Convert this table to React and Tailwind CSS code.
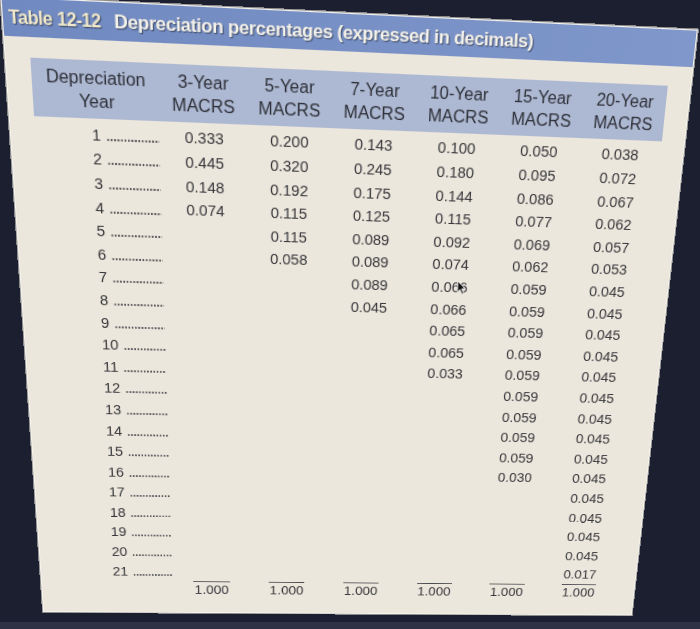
import React from 'react';

const columns = [
  { label: '3-Year', values: ['0.333', '0.445', '0.148', '0.074'] },
  { label: '5-Year', values: ['0.200', '0.320', '0.192', '0.115', '0.115', '0.058'] },
  { label: '7-Year', values: ['0.143', '0.245', '0.175', '0.125', '0.089', '0.089', '0.089', '0.045'] },
  {
    label: '10-Year',
    values: ['0.100', '0.180', '0.144', '0.115', '0.092', '0.074', '0.066', '0.066', '0.065', '0.065', '0.033'],
  },
  {
    label: '15-Year',
    values: [
      '0.050', '0.095', '0.086', '0.077', '0.069', '0.062',
      '0.059', '0.059', '0.059', '0.059', '0.059', '0.059', '0.059', '0.059', '0.059', '0.030',
    ],
  },
  {
    label: '20-Year',
    values: [
      '0.038', '0.072', '0.067', '0.062', '0.057', '0.053',
      '0.045', '0.045', '0.045', '0.045', '0.045', '0.045', '0.045',
      '0.045', '0.045', '0.045', '0.045', '0.045', '0.045', '0.045', '0.017',
    ],
  },
];

const years = Array.from({ length: 21 }, (_, i) => i + 1);

const Cursor = () => (
  <svg viewBox="0 0 12 18" className="absolute left-[47px] top-[3px] w-[10px] h-[15px]">
    <path d="M1 1 L1 14 L4 11 L6.5 16.5 L8.5 15.5 L6 10 L10.5 10 Z" fill="#111" stroke="#fff" strokeWidth="1" strokeLinejoin="round" />
  </svg>
);

const App = () => {
  return (
    <div className="w-[700px] h-[629px] overflow-hidden bg-[#1b1f2f] shadow-[inset_0_-7px_0_#2e3244] pt-[29px] pl-[30px] font-['Liberation_Sans',Arial,sans-serif]">
      <div className="w-[640px] h-[620px] bg-[#ece7dc] border border-[#f7f5ef] shadow-[0_0_0_1px_#8a8a8a] origin-center [transform:perspective(1000px)_rotateX(-16deg)_rotateY(3.5deg)_rotate(2.5deg)_skewX(1.2deg)]">
        {/* Title bar */}
        <div className="h-[33px] bg-[linear-gradient(90deg,#7089c0,#7f97ca)] flex items-center px-[5px] gap-[12px] [text-shadow:1px_1px_1px_rgba(0,0,0,0.45)]">
          <span className="text-[16px] font-bold tracking-tight text-[#f1e9cb]">Table 12-12</span>
          <span className="text-[17px] font-bold tracking-tight text-[#f5f2ea]">Depreciation percentages (expressed in decimals)</span>
        </div>

        <div className="px-[22px] pt-[18px] text-[#36363b]">
          {/* Header band */}
          <div className="h-[52px] bg-[#adb8d2] flex items-center text-[16px] leading-[21px] text-[#2e3038]">
            <div className="w-[116px] text-center">
              Depreciation
              <br />
              Year
            </div>
            {columns.map((c) => (
              <div key={c.label} className="w-[80px] text-center">
                {c.label}
                <br />
                MACRS
              </div>
            ))}
          </div>

          {/* Rows */}
          <div className="pt-[4px] text-[14.5px]">
            {years.map((y, r) => (
              <div key={y} className="h-[22.6px] flex items-center">
                <div className="w-[116px] flex items-end pl-[52px] pr-[2px]">
                  <span className="leading-[17px]">{y}</span>
                  <span className="ml-[5px] mb-[4px] flex-1 h-[2px] bg-[radial-gradient(circle,#55555a_0.7px,transparent_1px)] bg-[length:3.2px_2px] bg-repeat-x" />
                </div>
                {columns.map((c, ci) => {
                  const v = c.values[r];
                  return (
                    <div key={c.label} className="w-[80px] text-center relative">
                      {v && <span>{v}</span>}
                      {ci === 3 && r === 6 && <Cursor />}
                    </div>
                  );
                })}
              </div>
            ))}

            {/* Totals */}
            <div className="h-[24px] flex items-start">
              <div className="w-[116px]" />
              {columns.map((c) => (
                <div key={c.label} className="w-[80px] text-center">
                  <span className="inline-block border-t border-[#4a4a50] leading-[19px] px-[1px]">1.000</span>
                </div>
              ))}
            </div>
          </div>
        </div>
      </div>
    </div>
  );
};

export default App;
